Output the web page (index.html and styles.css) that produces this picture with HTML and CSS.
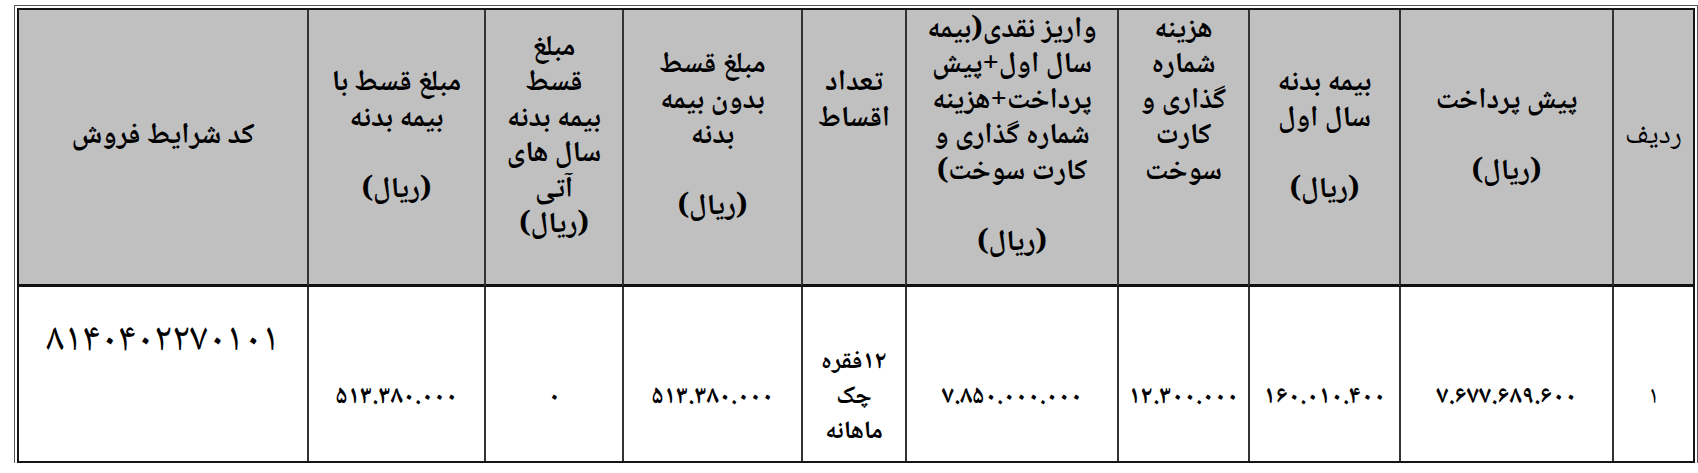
FILE: index.html
```html
<!DOCTYPE html>
<html lang="fa" dir="rtl">
<head>
<meta charset="utf-8">
<title>شرایط فروش</title>
<link rel="stylesheet" href="styles.css">
</head>
<body>
<div class="frame">
  <table class="sales">
    <colgroup>
      <col class="c-row">
      <col class="c-pre">
      <col class="c-ins1">
      <col class="c-plate">
      <col class="c-cash">
      <col class="c-count">
      <col class="c-noins">
      <col class="c-future">
      <col class="c-withins">
      <col class="c-code">
    </colgroup>
    <thead>
      <tr class="head">
        <th class="light">ردیف</th>
        <th>پیش پرداخت<br><br>(ریال)</th>
        <th>بیمه بدنه<br>سال اول<br><br>(ریال)</th>
        <th>هزینه<br>شماره<br>گذاری و<br>کارت<br>سوخت<br><br>&nbsp;</th>
        <th>واریز نقدی(بیمه<br>سال اول+پیش<br>پرداخت+هزینه<br>شماره گذاری و<br>کارت سوخت)<br><br>(ریال)</th>
        <th>تعداد<br>اقساط<br><br>&nbsp;</th>
        <th>مبلغ قسط<br>بدون بیمه<br>بدنه<br><br>(ریال)</th>
        <th>مبلغ<br>قسط<br>بیمه بدنه<br>سال های<br>آتی<br>(ریال)</th>
        <th>مبلغ قسط با<br>بیمه بدنه<br><br>(ریال)</th>
        <th>کد شرایط فروش</th>
      </tr>
    </thead>
    <tbody>
      <tr class="body">
        <td class="light">۱</td>
        <td>۷.۶۷۷.۶۸۹.۶۰۰</td>
        <td>۱۶۰.۰۱۰.۴۰۰</td>
        <td>۱۲.۳۰۰.۰۰۰</td>
        <td>۷.۸۵۰.۰۰۰.۰۰۰</td>
        <td>۱۲فقره<br>چک<br>ماهانه</td>
        <td>۵۱۳.۳۸۰.۰۰۰</td>
        <td>۰</td>
        <td>۵۱۳.۳۸۰.۰۰۰</td>
        <td class="code">۸۱۴۰۴۰۲۲۷۰۱۰۱</td>
      </tr>
    </tbody>
  </table>
</div>
</body>
</html>
```

FILE: styles.css
```css
html, body {
  margin: 0;
  padding: 0;
  background: #ffffff;
}

body {
  font-family: "Noto Naskh Arabic", "Noto Sans Arabic", "DejaVu Sans", sans-serif;
  color: #000000;
}

.frame {
  margin: 5px 0 0 6px;
  width: 1678px;
  padding: 2px 2px 0 2px;
  border: 1px solid #555555;
  border-bottom: none;
}

.sales {
  width: 1678px;
  table-layout: fixed;
  border-collapse: separate;
  border-spacing: 0;
  border: 2px solid #151515;
}

.c-row { width: 81px; }
.c-pre { width: 213px; }
.c-ins1 { width: 151px; }
.c-plate { width: 131px; }
.c-cash { width: 212px; }
.c-count { width: 104px; }
.c-noins { width: 179px; }
.c-future { width: 138px; }
.c-withins { width: 177px; }
.c-code { width: 288px; }

.sales th,
.sales td {
  padding: 0;
  text-align: center;
  white-space: nowrap;
  border-left: 2px solid #333333;
}

.sales th:last-child,
.sales td:last-child {
  border-left: none;
}

.head {
  height: 277px;
}

.sales th {
  background: #c0c0c0;
  border-bottom: 3px solid #111111;
  font-size: 29px;
  font-weight: bold;
  line-height: 35.5px;
  vertical-align: middle;
  padding-bottom: 20px;
}

.body {
  height: 174px;
}

.sales td {
  font-size: 25px;
  font-weight: bold;
  line-height: 35px;
  vertical-align: middle;
  padding-top: 46px;
}

.sales .light {
  font-weight: normal;
}

.sales td.code {
  vertical-align: top;
  padding-top: 34px;
  font-size: 40px;
  font-weight: normal;
  line-height: 40px;
  letter-spacing: 4px;
}
```
